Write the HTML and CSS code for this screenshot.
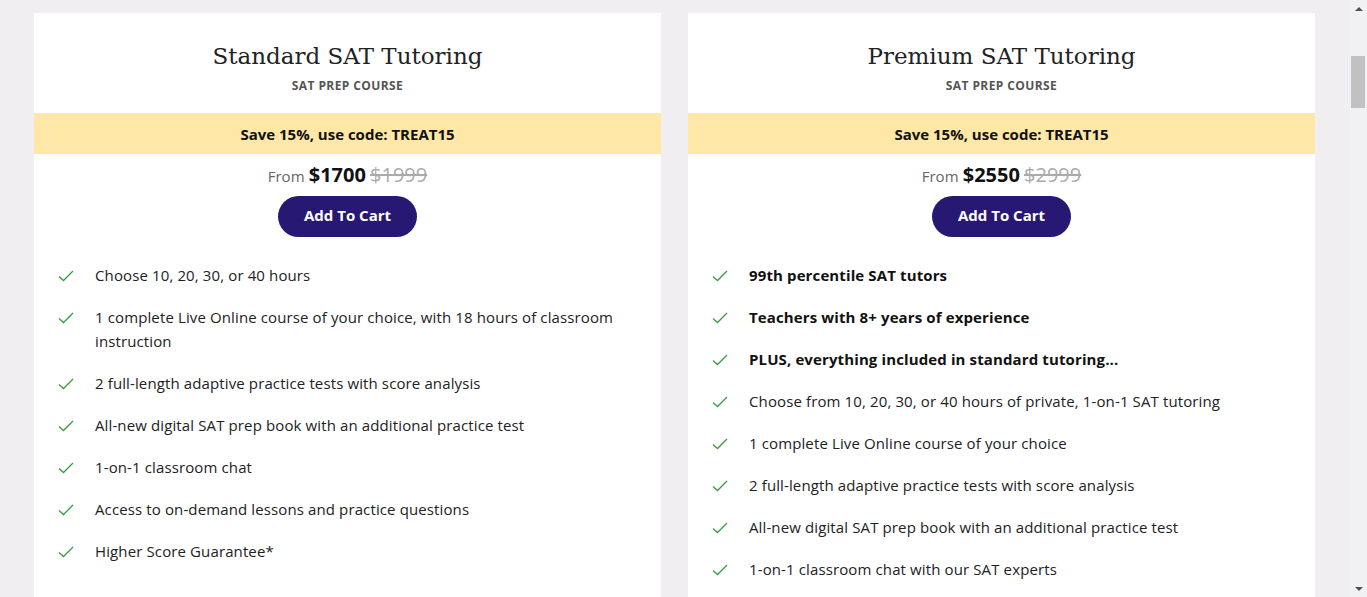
FILE: index.html
```html
<!DOCTYPE html>
<html>
<head>
<meta charset="utf-8">
<link rel="stylesheet" href="styles.css">
</head>
<body>
<div class="viewport">
<div class="page">
  <div class="card">
    <div class="head">
      <h2 class="title">Standard SAT Tutoring</h2>
      <div class="sub">SAT PREP COURSE</div>
    </div>
    <div class="promo">Save 15%, use code: TREAT15</div>
    <div class="price"><span class="from">From</span> <span class="now">$1700</span> <span class="was">$1999</span></div>
    <div class="btnrow"><button class="cart">Add To Cart</button></div>
    <ul class="feats">
      <li><svg class="chk" viewBox="0 0 16 12"><path d="M1 6.5 L5.5 10.5 L15 1"/></svg><span>Choose 10, 20, 30, or 40 hours</span></li>
      <li><svg class="chk" viewBox="0 0 16 12"><path d="M1 6.5 L5.5 10.5 L15 1"/></svg><span>1 complete Live Online course of your choice, with 18 hours of classroom instruction</span></li>
      <li><svg class="chk" viewBox="0 0 16 12"><path d="M1 6.5 L5.5 10.5 L15 1"/></svg><span>2 full-length adaptive practice tests with score analysis</span></li>
      <li><svg class="chk" viewBox="0 0 16 12"><path d="M1 6.5 L5.5 10.5 L15 1"/></svg><span>All-new digital SAT prep book with an additional practice test</span></li>
      <li><svg class="chk" viewBox="0 0 16 12"><path d="M1 6.5 L5.5 10.5 L15 1"/></svg><span>1-on-1 classroom chat</span></li>
      <li><svg class="chk" viewBox="0 0 16 12"><path d="M1 6.5 L5.5 10.5 L15 1"/></svg><span>Access to on-demand lessons and practice questions</span></li>
      <li><svg class="chk" viewBox="0 0 16 12"><path d="M1 6.5 L5.5 10.5 L15 1"/></svg><span>Higher Score Guarantee*</span></li>
    </ul>
  </div>
  <div class="card">
    <div class="head">
      <h2 class="title">Premium SAT Tutoring</h2>
      <div class="sub">SAT PREP COURSE</div>
    </div>
    <div class="promo">Save 15%, use code: TREAT15</div>
    <div class="price"><span class="from">From</span> <span class="now">$2550</span> <span class="was">$2999</span></div>
    <div class="btnrow"><button class="cart">Add To Cart</button></div>
    <ul class="feats">
      <li><svg class="chk" viewBox="0 0 16 12"><path d="M1 6.5 L5.5 10.5 L15 1"/></svg><span class="b">99th percentile SAT tutors</span></li>
      <li><svg class="chk" viewBox="0 0 16 12"><path d="M1 6.5 L5.5 10.5 L15 1"/></svg><span class="b">Teachers with 8+ years of experience</span></li>
      <li><svg class="chk" viewBox="0 0 16 12"><path d="M1 6.5 L5.5 10.5 L15 1"/></svg><span class="b">PLUS, everything included in standard tutoring...</span></li>
      <li><svg class="chk" viewBox="0 0 16 12"><path d="M1 6.5 L5.5 10.5 L15 1"/></svg><span>Choose from 10, 20, 30, or 40 hours of private, 1-on-1 SAT tutoring</span></li>
      <li><svg class="chk" viewBox="0 0 16 12"><path d="M1 6.5 L5.5 10.5 L15 1"/></svg><span>1 complete Live Online course of your choice</span></li>
      <li><svg class="chk" viewBox="0 0 16 12"><path d="M1 6.5 L5.5 10.5 L15 1"/></svg><span>2 full-length adaptive practice tests with score analysis</span></li>
      <li><svg class="chk" viewBox="0 0 16 12"><path d="M1 6.5 L5.5 10.5 L15 1"/></svg><span>All-new digital SAT prep book with an additional practice test</span></li>
      <li><svg class="chk" viewBox="0 0 16 12"><path d="M1 6.5 L5.5 10.5 L15 1"/></svg><span>1-on-1 classroom chat with our SAT experts</span></li>
    </ul>
  </div>
</div>
</div>
<div class="scrollbar">
  <div class="arrow up"></div>
  <div class="track"><div class="thumb"></div></div>
  <div class="arrow down"></div>
</div>
</body>
</html>
```
FILE: styles.css
```css
html, body {
  margin: 0;
  padding: 0;
  background: #f0eef1;
}
body {
  font-family: "Open Sans", "Noto Sans", sans-serif;
  color: #222;
  display: flex;
  height: 597px;
  overflow: hidden;
}
.viewport {
  flex: 1;
  height: 597px;
  overflow: hidden;
}
.page {
  display: grid;
  grid-template-columns: 627px 627px;
  column-gap: 27px;
  justify-content: start;
  padding-top: 13px;
  padding-left: 34px;
}
.card {
  background: #fff;
  padding-bottom: 40px;
}
.head {
  text-align: center;
  padding-top: 26px;
  height: 74px;
}
.title {
  margin: 0;
  font-family: "DejaVu Serif", "Liberation Serif", serif;
  font-weight: 400;
  font-size: 23px;
  line-height: 34px;
  color: #222;
}
.sub {
  margin-top: 5px;
  font-size: 12px;
  font-weight: 700;
  color: #555;
  letter-spacing: 0.4px;
  line-height: 16px;
}
.promo {
  background: #fee7a7;
  height: 41px;
  display: flex;
  align-items: center;
  justify-content: center;
  font-size: 15px;
  font-weight: 700;
  color: #111;
}
.price {
  text-align: center;
  margin-top: 8px;
  line-height: 26px;
}
.from {
  font-size: 15px;
  color: #666;
}
.now {
  font-size: 20px;
  font-weight: 700;
  color: #111;
}
.was {
  font-size: 20px;
  color: #aaa;
  text-decoration: line-through;
}
.btnrow {
  display: flex;
  justify-content: center;
  margin-top: 7px;
}
.cart {
  width: 139px;
  height: 41px;
  border: none;
  border-radius: 21px;
  background: #271874;
  color: #fff;
  font-family: "Open Sans", sans-serif;
  font-size: 15px;
  font-weight: 700;
  padding: 0 0 3px;
  cursor: pointer;
}
.feats {
  list-style: none;
  margin: 26px 0 0;
  padding: 0 24px 0 24px;
  display: flex;
  flex-direction: column;
  gap: 18px;
}
.feats li {
  display: flex;
  align-items: flex-start;
  font-size: 15px;
  line-height: 24px;
  letter-spacing: 0.12px;
  color: #222;
}
.chk {
  flex: none;
  width: 16px;
  height: 12px;
  margin-top: 7px;
  margin-right: 21px;
  fill: none;
  stroke: #3d9a43;
  stroke-width: 1.3;
}
.b {
  font-weight: 700;
  color: #111;
}
.scrollbar {
  flex: none;
  width: 17px;
  height: 597px;
  background: #f1f0f2;
  display: flex;
  flex-direction: column;
}
.arrow {
  height: 17px;
  display: flex;
  align-items: center;
  justify-content: center;
}
.arrow::before {
  content: "";
  width: 0;
  height: 0;
  border-left: 4px solid transparent;
  border-right: 4px solid transparent;
}
.arrow.up::before {
  border-bottom: 4px solid #505050;
}
.arrow.down::before {
  border-top: 4px solid #505050;
}
.track {
  flex: 1;
  padding: 39px 2px 0 1px;
}
.thumb {
  height: 52px;
  background: #c1c1c1;
}
```
